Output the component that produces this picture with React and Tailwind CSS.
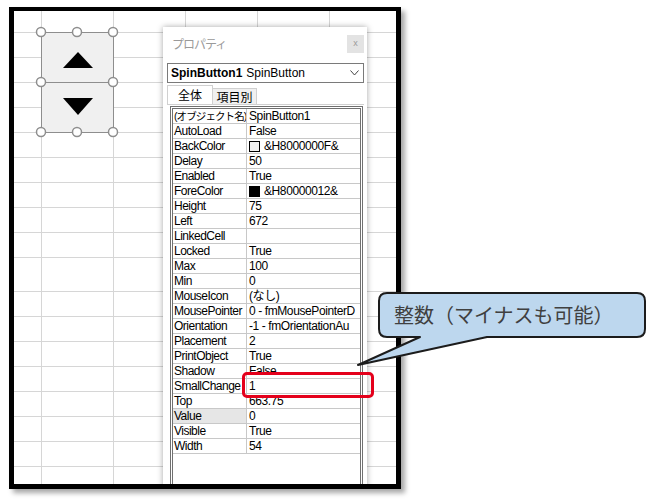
import React from "react";

const rowHeights = [22, 25, 25, 25, 25, 25, 25, 25, 25, 25, 34, 25, 25, 25, 25, 25, 25, 25];
const colWidths = [28, 72, 72, 72, 72];

const props = [
  ["(オブジェクト名)", "SpinButton1"],
  ["AutoLoad", "False"],
  ["BackColor", "&H8000000F&", "white"],
  ["Delay", "50"],
  ["Enabled", "True"],
  ["ForeColor", "&H80000012&", "black"],
  ["Height", "75"],
  ["Left", "672"],
  ["LinkedCell", ""],
  ["Locked", "True"],
  ["Max", "100"],
  ["Min", "0"],
  ["MouseIcon", "(なし)"],
  ["MousePointer", "0 - fmMousePointerD"],
  ["Orientation", "-1 - fmOrientationAu"],
  ["Placement", "2"],
  ["PrintObject", "True"],
  ["Shadow", "False"],
  ["SmallChange", "1"],
  ["Top", "663.75"],
  ["Value", "0"],
  ["Visible", "True"],
  ["Width", "54"],
];

// sheet background: gridlines of the worksheet
const SheetGrid = () => (
  <div className="flex flex-col h-full">
    {rowHeights.map((h, i) => (
      <div key={i} className="flex shrink-0" style={{ height: h }}>
        {colWidths.map((w, j) => (
          <div key={j} className="shrink-0 border-r border-b border-[#d6d6d6]" style={{ width: w }} />
        ))}
        <div className="flex-1 border-b border-[#d6d6d6]" />
      </div>
    ))}
    <div className="flex flex-1">
      {colWidths.map((w, j) => (
        <div key={j} className="shrink-0 border-r border-[#d6d6d6]" style={{ width: w }} />
      ))}
    </div>
  </div>
);

const SpinButton = () => (
  <div className="absolute left-[27px] top-[21px] w-[73px] h-[101px]">
    <div className="flex flex-col w-full h-full border border-[#8e8e8e] bg-[#f0f0f0]">
      <div className="flex-1 flex items-center justify-center border-b border-[#8e8e8e]">
        <svg width="30" height="16" viewBox="0 0 30 16" className="mt-[4px]">
          <polygon points="15,0 30,16 0,16" fill="#000" />
        </svg>
      </div>
      <div className="flex-1 flex items-center justify-center">
        <svg width="30" height="17" viewBox="0 0 30 17" className="mt-[-2px]">
          <polygon points="0,0 30,0 15,17" fill="#000" />
        </svg>
      </div>
    </div>
    <svg className="absolute left-[-6px] top-[-6px] overflow-visible" width="85" height="113">
      {[
        [6, 6], [42, 6], [78, 6],
        [6, 56], [78, 56],
        [6, 106], [42, 106], [78, 106],
      ].map(([cx, cy], i) => (
        <circle key={i} cx={cx} cy={cy} r="4.5" fill="#fff" stroke="#8e8e8e" strokeWidth="1.5" />
      ))}
    </svg>
  </div>
);

const PropRow = ({ name, value, swatch, selected }) => (
  <div className="flex h-[15px] border-b border-[#c8c8c8] leading-[14px] text-[12px] text-black">
    <div
      className={`w-[74px] shrink-0 pl-[1px] overflow-hidden whitespace-nowrap border-r border-[#c8c8c8] ${
        selected ? "bg-[#e6e6e6]" : ""
      } ${name.startsWith("(") ? "text-[10.5px] tracking-[-0.9px]" : "tracking-[-0.5px]"}`}
    >
      {name}
    </div>
    <div className="flex-1 pl-[2px] overflow-hidden whitespace-nowrap flex items-center tracking-[-0.4px]">
      {swatch && (
        <span
          className={`inline-block w-[11px] h-[11px] border border-black mr-[4px] ${
            swatch === "black" ? "bg-black" : "bg-[#f0f0f0]"
          }`}
        />
      )}
      <span>{value}</span>
    </div>
  </div>
);

const PropertiesWindow = () => (
  <div className="absolute left-[149px] top-[16px] w-[204px] h-[480px] bg-[#f0f0f0] shadow-[0_0_6px_rgba(0,0,0,0.35)] flex flex-col">
    <div className="h-[33px] bg-white flex items-center justify-between pl-[9px] pr-[3px] shrink-0">
      <span className="text-[12px] text-[#9a9a9a] font-['Noto_Sans_CJK_JP',sans-serif] tracking-[-1px]">
        プロパティ
      </span>
      <div className="w-[17px] h-[18px] bg-[#e3e3e3] flex items-center justify-center text-[9px] text-[#9a9a9a] leading-none">
        x
      </div>
    </div>
    <div className="pl-[4px] pr-[3px] pt-[3px] flex flex-col flex-1 bg-white">
      <div className="h-[20px] border border-[#7a7a7a] bg-white flex items-center pl-[3px] pr-[4px] text-[12px] text-black">
        <span className="font-bold">SpinButton1</span>
        <span className="ml-[4px]">SpinButton</span>
        <svg className="ml-auto" width="9" height="6" viewBox="0 0 9 6">
          <polyline points="0.5,0.5 4.5,5 8.5,0.5" fill="none" stroke="#444" strokeWidth="1" />
        </svg>
      </div>
      <div className="flex items-end h-[20px] mt-[1px] text-[12px] font-['Noto_Sans_CJK_JP',sans-serif]">
        <div className="h-[19px] w-[46px] border border-b-0 border-[#d0d0d0] bg-white flex items-center justify-center">
          全体
        </div>
        <div className="h-[16px] w-[44px] border border-b-0 border-l-0 border-[#d0d0d0] bg-[#f0f0f0] flex items-center justify-center">
          項目別
        </div>
      </div>
      <div className="flex-1 bg-white pl-[3px] pt-[1px] border-t border-[#d0d0d0]">
        <div className="h-full border-[3px] border-double border-[#707070] bg-white mr-[1px]">
          {props.map(([n, v, s]) => (
            <PropRow key={n} name={n} value={v} swatch={s} selected={n === "Value"} />
          ))}
        </div>
      </div>
    </div>
  </div>
);

const Callout = () => (
  <div className="absolute left-[350px] top-[285px] w-[300px] h-[90px]">
    <svg width="300" height="90" viewBox="0 0 300 90" className="absolute left-0 top-0">
      <path
        d="M37 8 H287 Q295 8 295 16 V44 Q295 52 287 52 H137 L8 80 L70 52 H37 Q29 52 29 44 V16 Q29 8 37 8 Z"
        fill="#bdd7ee"
        stroke="#1c1c1c"
        strokeWidth="2"
        strokeLinejoin="round"
      />
    </svg>
    <div className="absolute left-[44px] top-[17px] text-[20px] leading-[26px] text-[#404040] font-['Noto_Sans_CJK_JP',sans-serif] whitespace-nowrap">
      整数（マイナスも可能）
    </div>
  </div>
);

export default function App() {
  return (
    <div className="relative w-[663px] h-[504px] bg-white overflow-hidden font-['Liberation_Sans','Noto_Sans_CJK_JP',sans-serif]">
      <div className="ml-[9px] mt-[7px] w-[392px] h-[482px] border-black border-l-[5px] border-t-[4px] border-r-[5px] border-b-[5px] shadow-[4px_4px_5px_rgba(0,0,0,0.35)] relative overflow-hidden">
        <SheetGrid />
        <SpinButton />
        <PropertiesWindow />
      </div>
      {/* highlight on SmallChange */}
      <div className="absolute left-[242px] top-[372px] w-[132px] h-[26px] border-[3px] border-[#e4001b] rounded-[5px]" />
      <Callout />
    </div>
  );
}
